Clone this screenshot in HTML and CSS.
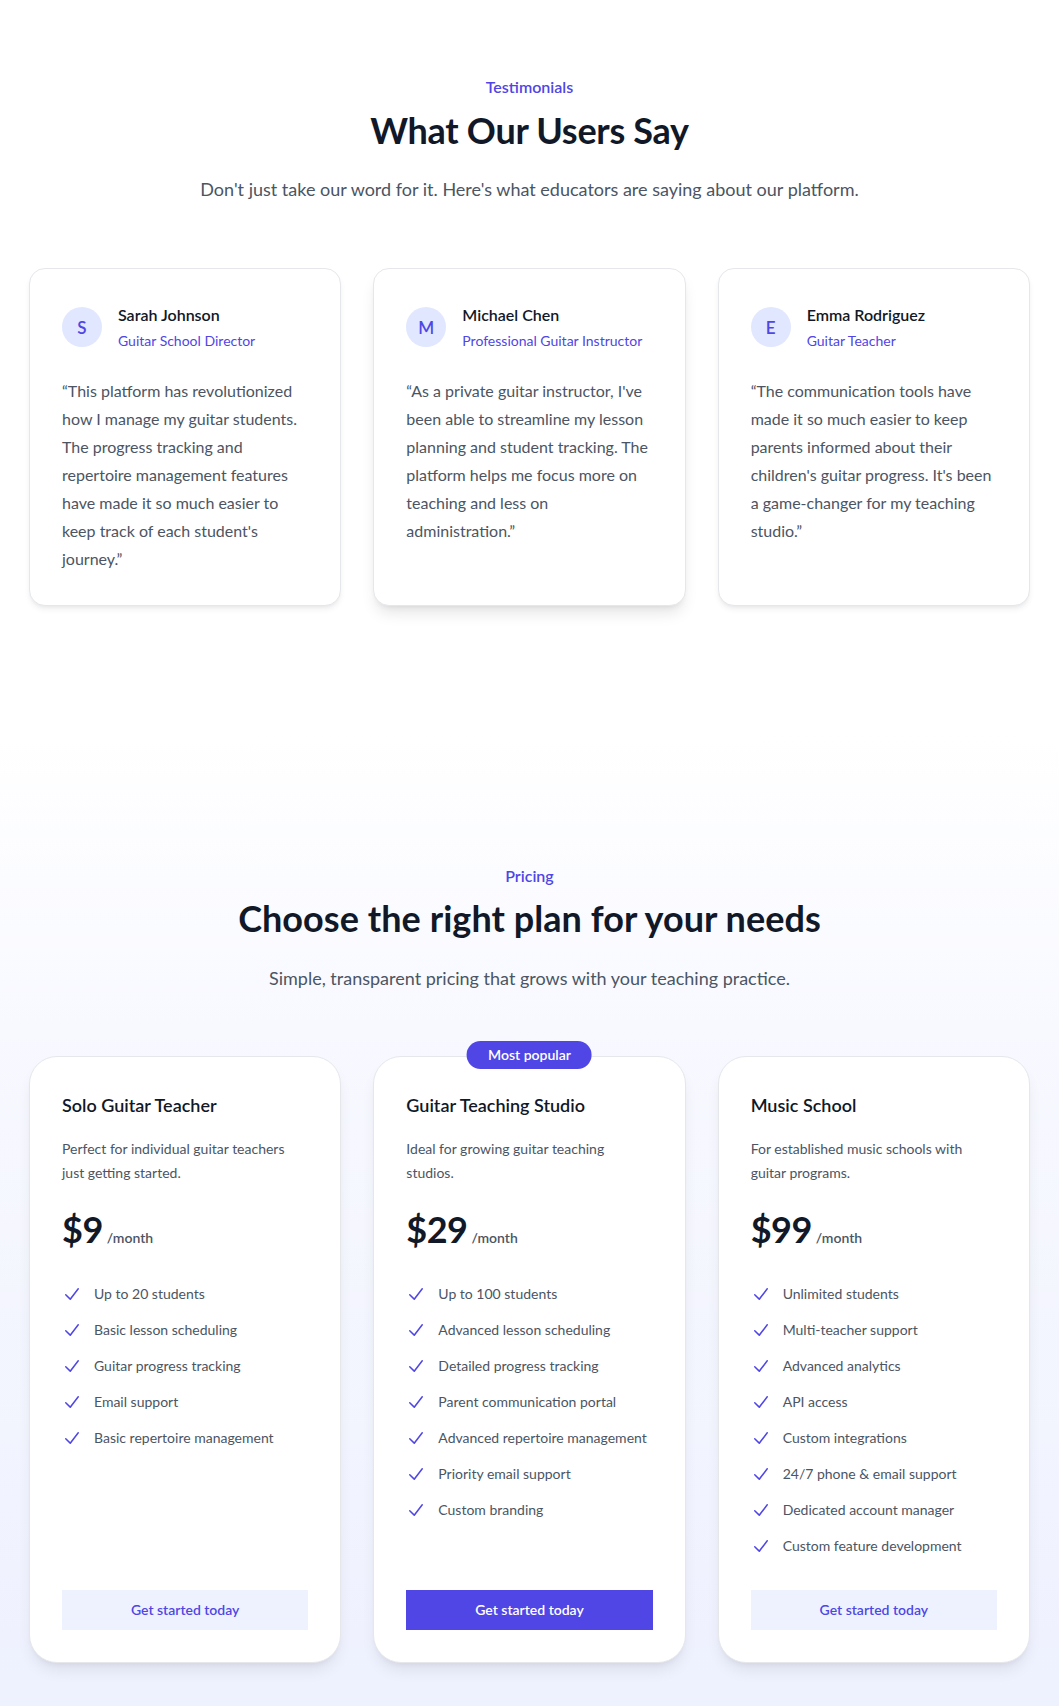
FILE: index.html
```html
<!DOCTYPE html>
<html lang="en">
<head>
<meta charset="utf-8">
<title>Testimonials &amp; Pricing</title>
<link rel="stylesheet" href="styles.css">
</head>
<body>
<section class="testimonials">
  <div class="section-head">
    <p class="eyebrow">Testimonials</p>
    <h2 class="headline">What Our Users Say</h2>
    <p class="lead lead-tight">Don't just take our word for it. Here's what educators are saying about our platform.</p>
  </div>
  <div class="grid">
    <figure class="t-card">
      <div class="t-head">
        <div class="avatar">S</div>
        <div>
          <div class="t-name">Sarah Johnson</div>
          <div class="t-role">Guitar School Director</div>
        </div>
      </div>
      <blockquote class="t-quote">“This platform has revolutionized how I manage my guitar students. The progress tracking and repertoire management features have made it so much easier to keep track of each student's journey.”</blockquote>
    </figure>
    <figure class="t-card t-card-featured">
      <div class="t-head">
        <div class="avatar">M</div>
        <div>
          <div class="t-name">Michael Chen</div>
          <div class="t-role">Professional Guitar Instructor</div>
        </div>
      </div>
      <blockquote class="t-quote">“As a private guitar instructor, I've been able to streamline my lesson planning and student tracking. The platform helps me focus more on teaching and less on administration.”</blockquote>
    </figure>
    <figure class="t-card">
      <div class="t-head">
        <div class="avatar">E</div>
        <div>
          <div class="t-name">Emma Rodriguez</div>
          <div class="t-role">Guitar Teacher</div>
        </div>
      </div>
      <blockquote class="t-quote">“The communication tools have made it so much easier to keep parents informed about their children's guitar progress. It's been a game-changer for my teaching studio.”</blockquote>
    </figure>
  </div>
</section>

<section class="pricing">
  <div class="section-head">
    <p class="eyebrow">Pricing</p>
    <h2 class="headline headline-wide">Choose the right plan for your needs</h2>
    <p class="lead">Simple, transparent pricing that grows with your teaching practice.</p>
  </div>
  <div class="grid grid-pricing">
    <div class="p-card">
      <div>
        <h3 class="p-title">Solo Guitar Teacher</h3>
        <p class="p-desc">Perfect for individual guitar teachers just getting started.</p>
        <p class="p-price"><span class="amount">$9</span><span class="per">/month</span></p>
        <ul class="features">
          <li><svg class="check" viewBox="0 0 20 20"><path d="M16.704 4.153a.75.75 0 01.143 1.052l-8 10.5a.75.75 0 01-1.127.075l-4.5-4.5a.75.75 0 011.06-1.06l3.894 3.893 7.48-9.817a.75.75 0 011.05-.143z"/></svg>Up to 20 students</li>
          <li><svg class="check" viewBox="0 0 20 20"><path d="M16.704 4.153a.75.75 0 01.143 1.052l-8 10.5a.75.75 0 01-1.127.075l-4.5-4.5a.75.75 0 011.06-1.06l3.894 3.893 7.48-9.817a.75.75 0 011.05-.143z"/></svg>Basic lesson scheduling</li>
          <li><svg class="check" viewBox="0 0 20 20"><path d="M16.704 4.153a.75.75 0 01.143 1.052l-8 10.5a.75.75 0 01-1.127.075l-4.5-4.5a.75.75 0 011.06-1.06l3.894 3.893 7.48-9.817a.75.75 0 011.05-.143z"/></svg>Guitar progress tracking</li>
          <li><svg class="check" viewBox="0 0 20 20"><path d="M16.704 4.153a.75.75 0 01.143 1.052l-8 10.5a.75.75 0 01-1.127.075l-4.5-4.5a.75.75 0 011.06-1.06l3.894 3.893 7.48-9.817a.75.75 0 011.05-.143z"/></svg>Email support</li>
          <li><svg class="check" viewBox="0 0 20 20"><path d="M16.704 4.153a.75.75 0 01.143 1.052l-8 10.5a.75.75 0 01-1.127.075l-4.5-4.5a.75.75 0 011.06-1.06l3.894 3.893 7.48-9.817a.75.75 0 011.05-.143z"/></svg>Basic repertoire management</li>
        </ul>
      </div>
      <a class="btn btn-soft" href="#">Get started today</a>
    </div>

    <div class="p-card">
      <span class="badge">Most popular</span>
      <div>
        <h3 class="p-title">Guitar Teaching Studio</h3>
        <p class="p-desc">Ideal for growing guitar teaching studios.</p>
        <p class="p-price"><span class="amount">$29</span><span class="per">/month</span></p>
        <ul class="features">
          <li><svg class="check" viewBox="0 0 20 20"><path d="M16.704 4.153a.75.75 0 01.143 1.052l-8 10.5a.75.75 0 01-1.127.075l-4.5-4.5a.75.75 0 011.06-1.06l3.894 3.893 7.48-9.817a.75.75 0 011.05-.143z"/></svg>Up to 100 students</li>
          <li><svg class="check" viewBox="0 0 20 20"><path d="M16.704 4.153a.75.75 0 01.143 1.052l-8 10.5a.75.75 0 01-1.127.075l-4.5-4.5a.75.75 0 011.06-1.06l3.894 3.893 7.48-9.817a.75.75 0 011.05-.143z"/></svg>Advanced lesson scheduling</li>
          <li><svg class="check" viewBox="0 0 20 20"><path d="M16.704 4.153a.75.75 0 01.143 1.052l-8 10.5a.75.75 0 01-1.127.075l-4.5-4.5a.75.75 0 011.06-1.06l3.894 3.893 7.48-9.817a.75.75 0 011.05-.143z"/></svg>Detailed progress tracking</li>
          <li><svg class="check" viewBox="0 0 20 20"><path d="M16.704 4.153a.75.75 0 01.143 1.052l-8 10.5a.75.75 0 01-1.127.075l-4.5-4.5a.75.75 0 011.06-1.06l3.894 3.893 7.48-9.817a.75.75 0 011.05-.143z"/></svg>Parent communication portal</li>
          <li><svg class="check" viewBox="0 0 20 20"><path d="M16.704 4.153a.75.75 0 01.143 1.052l-8 10.5a.75.75 0 01-1.127.075l-4.5-4.5a.75.75 0 011.06-1.06l3.894 3.893 7.48-9.817a.75.75 0 011.05-.143z"/></svg>Advanced repertoire management</li>
          <li><svg class="check" viewBox="0 0 20 20"><path d="M16.704 4.153a.75.75 0 01.143 1.052l-8 10.5a.75.75 0 01-1.127.075l-4.5-4.5a.75.75 0 011.06-1.06l3.894 3.893 7.48-9.817a.75.75 0 011.05-.143z"/></svg>Priority email support</li>
          <li><svg class="check" viewBox="0 0 20 20"><path d="M16.704 4.153a.75.75 0 01.143 1.052l-8 10.5a.75.75 0 01-1.127.075l-4.5-4.5a.75.75 0 011.06-1.06l3.894 3.893 7.48-9.817a.75.75 0 011.05-.143z"/></svg>Custom branding</li>
        </ul>
      </div>
      <a class="btn btn-solid" href="#">Get started today</a>
    </div>

    <div class="p-card">
      <div>
        <h3 class="p-title">Music School</h3>
        <p class="p-desc">For established music schools with guitar programs.</p>
        <p class="p-price"><span class="amount">$99</span><span class="per">/month</span></p>
        <ul class="features">
          <li><svg class="check" viewBox="0 0 20 20"><path d="M16.704 4.153a.75.75 0 01.143 1.052l-8 10.5a.75.75 0 01-1.127.075l-4.5-4.5a.75.75 0 011.06-1.06l3.894 3.893 7.48-9.817a.75.75 0 011.05-.143z"/></svg>Unlimited students</li>
          <li><svg class="check" viewBox="0 0 20 20"><path d="M16.704 4.153a.75.75 0 01.143 1.052l-8 10.5a.75.75 0 01-1.127.075l-4.5-4.5a.75.75 0 011.06-1.06l3.894 3.893 7.48-9.817a.75.75 0 011.05-.143z"/></svg>Multi-teacher support</li>
          <li><svg class="check" viewBox="0 0 20 20"><path d="M16.704 4.153a.75.75 0 01.143 1.052l-8 10.5a.75.75 0 01-1.127.075l-4.5-4.5a.75.75 0 011.06-1.06l3.894 3.893 7.48-9.817a.75.75 0 011.05-.143z"/></svg>Advanced analytics</li>
          <li><svg class="check" viewBox="0 0 20 20"><path d="M16.704 4.153a.75.75 0 01.143 1.052l-8 10.5a.75.75 0 01-1.127.075l-4.5-4.5a.75.75 0 011.06-1.06l3.894 3.893 7.48-9.817a.75.75 0 011.05-.143z"/></svg>API access</li>
          <li><svg class="check" viewBox="0 0 20 20"><path d="M16.704 4.153a.75.75 0 01.143 1.052l-8 10.5a.75.75 0 01-1.127.075l-4.5-4.5a.75.75 0 011.06-1.06l3.894 3.893 7.48-9.817a.75.75 0 011.05-.143z"/></svg>Custom integrations</li>
          <li><svg class="check" viewBox="0 0 20 20"><path d="M16.704 4.153a.75.75 0 01.143 1.052l-8 10.5a.75.75 0 01-1.127.075l-4.5-4.5a.75.75 0 011.06-1.06l3.894 3.893 7.48-9.817a.75.75 0 011.05-.143z"/></svg>24/7 phone &amp; email support</li>
          <li><svg class="check" viewBox="0 0 20 20"><path d="M16.704 4.153a.75.75 0 01.143 1.052l-8 10.5a.75.75 0 01-1.127.075l-4.5-4.5a.75.75 0 011.06-1.06l3.894 3.893 7.48-9.817a.75.75 0 011.05-.143z"/></svg>Dedicated account manager</li>
          <li><svg class="check" viewBox="0 0 20 20"><path d="M16.704 4.153a.75.75 0 01.143 1.052l-8 10.5a.75.75 0 01-1.127.075l-4.5-4.5a.75.75 0 011.06-1.06l3.894 3.893 7.48-9.817a.75.75 0 011.05-.143z"/></svg>Custom feature development</li>
        </ul>
      </div>
      <a class="btn btn-soft" href="#">Get started today</a>
    </div>
  </div>
</section>
</body>
</html>
```

FILE: styles.css
```css
* { box-sizing: border-box; }

html, body {
  margin: 0;
  padding: 0;
}

body {
  font-family: Lato, "Liberation Sans", sans-serif;
  color: #111827;
  background: #ffffff;
}

p, h2, h3, ul, blockquote, figure { margin: 0; padding: 0; }

/* Section heads */
.section-head {
  text-align: center;
}

.eyebrow {
  font-size: 16px;
  line-height: 28px;
  font-weight: 600;
  color: #4f46e5;
}

.headline {
  margin-top: 9px;
  font-size: 36px;
  line-height: 40px;
  font-weight: 700;
  letter-spacing: -0.3px;
  color: #111827;
}

.headline-wide {
  margin-top: 8px;
  letter-spacing: 0.05px;
}

.lead {
  margin-top: 24px;
  font-size: 18px;
  line-height: 32px;
  color: #4b5563;
}

.lead-tight {
  margin-top: 23px;
}

.grid {
  margin-top: 63px;
  display: grid;
  grid-template-columns: repeat(3, 1fr);
  gap: 32px;
}

.grid-pricing {
  margin-top: 62px;
}

/* Testimonials */
.testimonials {
  padding: 73px 29px 129px;
  background: #ffffff;
}

.t-card {
  background: #ffffff;
  border: 1px solid #e5e7eb;
  border-radius: 16px;
  padding: 32px;
  box-shadow: 0 4px 6px -1px rgba(0, 0, 0, 0.07), 0 2px 4px -2px rgba(0, 0, 0, 0.06);
}

.t-card-featured {
  box-shadow: 0 10px 15px -3px rgba(0, 0, 0, 0.1), 0 4px 6px -4px rgba(0, 0, 0, 0.1);
}

.t-head {
  margin-top: 2px;
  display: flex;
  align-items: center;
  gap: 16px;
}

.avatar {
  flex: none;
  width: 40px;
  height: 40px;
  border-radius: 50%;
  background: #e0e7ff;
  color: #4f46e5;
  font-size: 17px;
  font-weight: 600;
  display: flex;
  align-items: center;
  justify-content: center;
}

.t-name {
  font-size: 16px;
  line-height: 24px;
  font-weight: 600;
  color: #111827;
}

.t-role {
  margin-top: 4px;
  font-size: 14px;
  line-height: 20px;
  color: #4f46e5;
}

.t-quote {
  margin-top: 26px;
  font-size: 16px;
  line-height: 28px;
  color: #4b5563;
}

/* Pricing */
.pricing {
  padding: 127px 29px 43px;
  background: linear-gradient(to bottom, #ffffff 0%, #f8f9ff 30%, #eef1fe 100%);
}

.p-card {
  position: relative;
  background: #ffffff;
  border: 1px solid #e5e7eb;
  border-radius: 28px;
  padding: 32px;
  display: flex;
  flex-direction: column;
  justify-content: space-between;
  box-shadow: 0 10px 15px -3px rgba(0, 0, 0, 0.08), 0 4px 6px -4px rgba(0, 0, 0, 0.08);
}

.badge {
  position: absolute;
  top: -16px;
  left: 50%;
  transform: translateX(-50%);
  height: 28px;
  line-height: 28px;
  padding: 0 21px;
  border-radius: 999px;
  background: #4f46e5;
  color: #ffffff;
  font-size: 14px;
  font-weight: 600;
  white-space: nowrap;
}

.p-title {
  font-size: 18px;
  line-height: 32px;
  font-weight: 600;
  color: #111827;
}

.p-desc {
  margin-top: 16px;
  font-size: 14px;
  line-height: 24px;
  color: #4b5563;
}

.p-price {
  margin-top: 24px;
  display: flex;
  align-items: baseline;
  gap: 4px;
}

.amount {
  font-size: 36px;
  line-height: 40px;
  font-weight: 700;
  letter-spacing: -0.5px;
  color: #111827;
}

.per {
  font-size: 14px;
  line-height: 24px;
  font-weight: 600;
  color: #4b5563;
}

.features {
  margin-top: 32px;
  list-style: none;
  display: flex;
  flex-direction: column;
  gap: 12px;
  font-size: 14px;
  line-height: 24px;
  color: #4b5563;
}

.features li {
  display: flex;
  gap: 12px;
}

.check {
  flex: none;
  width: 20px;
  height: 24px;
  fill: #4f46e5;
}

.btn {
  display: block;
  margin-top: 32px;
  padding: 8px 12px;
  font-size: 14px;
  line-height: 24px;
  font-weight: 600;
  text-align: center;
  text-decoration: none;
}

.btn-soft {
  background: #eef2ff;
  color: #4f46e5;
}

.btn-solid {
  background: #4f46e5;
  color: #ffffff;
}
```
